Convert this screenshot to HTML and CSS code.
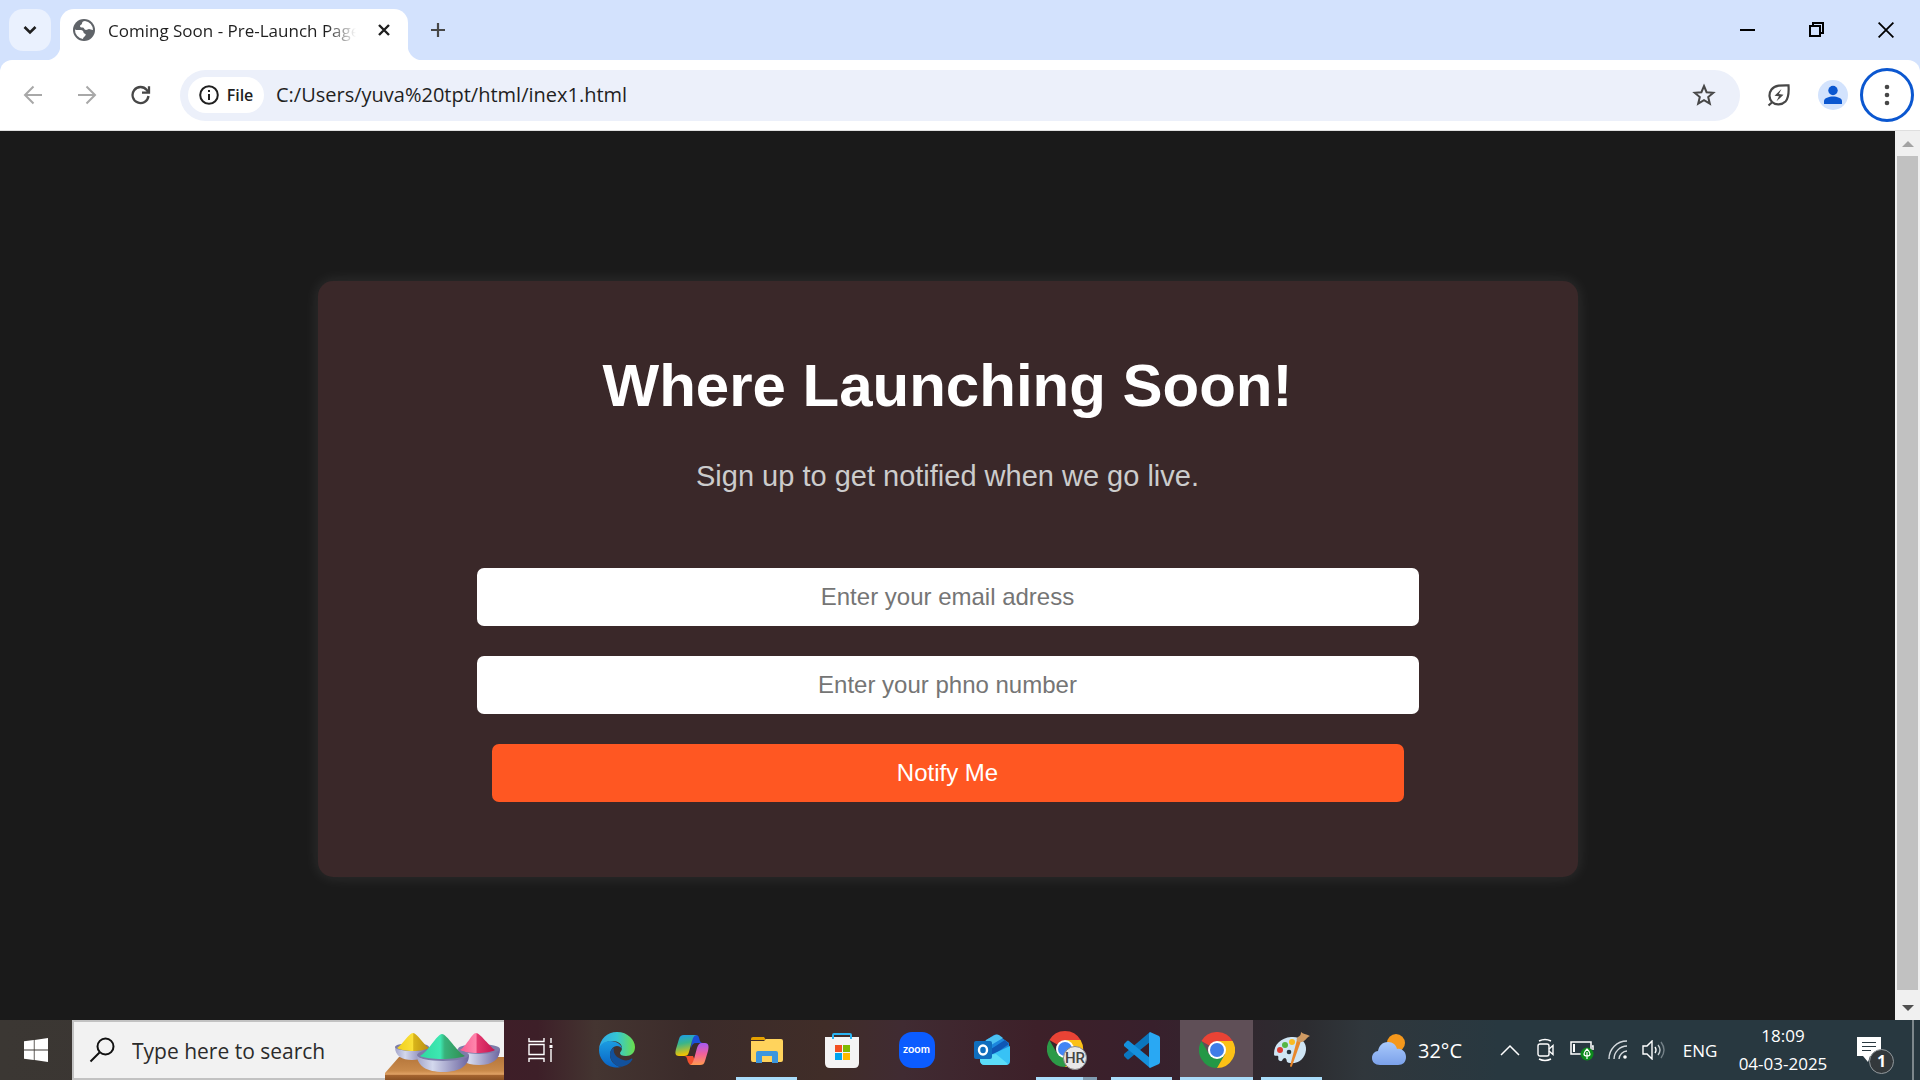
FILE: index.html
```html
<!DOCTYPE html>
<html lang="en">
<head>
<meta charset="utf-8">
<meta name="viewport" content="width=device-width, initial-scale=1">
<title>Coming Soon - Pre-Launch Page</title>
<link rel="stylesheet" href="styles.css">
</head>
<body>
<header class="browser">
  <div class="tabstrip">
    <button class="tab-search" aria-label="Search tabs">
      <svg width="16" height="16" viewBox="0 0 16 16" fill="none" stroke="#1f1f1f" stroke-width="2.6"><path d="M2.5 5 8 10.5 13.500 5"/></svg>
    </button>
    <div class="tab">
      <svg width="22" height="22" viewBox="0 0 22 22"><circle cx="11" cy="11" r="11" fill="#5f6368"/><path d="M12 2c-2 0-3 1-3 2.500 0 1.500-2 1-2 2.500 0 1.300 1 1.600 2.500 1.600 2 0 1.500 2.400 3.500 2.400 1.500 0 1.800-1 3-1 1.500 0 2.200 1 4 1A9 9 0 0 0 12 2ZM2 10.500c2 1 5 0 7 .8 2 .9 1 2.700 2.500 3.200 1.700.5 1.500 1.500.5 2.500-.9.900-1.800 1.700-2 3A9 9 0 0 1 2 10.500Z" fill="#fff"/></svg>
      <span class="tab-title">Coming Soon - Pre-Launch Page</span>
      <button class="tab-close" aria-label="Close tab">
        <svg width="14" height="14" viewBox="0 0 14 14" stroke="#1f1f1f" stroke-width="2.400"><path d="m2 2 10 10M12 2 2 12"/></svg>
      </button>
    </div>
    <button class="new-tab" aria-label="New tab">
      <svg width="16" height="16" viewBox="0 0 16 16" stroke="#474747" stroke-width="2.200"><path d="M8 1v14M1 8h14"/></svg>
    </button>
    <div class="window-controls">
      <button aria-label="Minimize"><svg width="16" height="16" viewBox="0 0 16 16"><path d="M0 7h15v2H0z"/></svg></button>
      <button aria-label="Restore"><svg width="16" height="16" viewBox="0 0 16 16" fill="none" stroke="#000" stroke-width="2"><path d="M1 4h10v10H1zM4 4V1h10v10h-3"/></svg></button>
      <button aria-label="Close"><svg width="16" height="16" viewBox="0 0 16 16" stroke="#000" stroke-width="1.800"><path d="m.6.6 14.800 14.800M15.400.6.600 15.400"/></svg></button>
    </div>
  </div>
  <div class="toolbar">
    <nav class="history" aria-label="History">
      <button aria-label="Back"><svg width="20" height="20" viewBox="0 0 20 20" fill="none" stroke="#a8a8a8" stroke-width="2"><path d="M19 10H2.500M10.500 1.500 2 10l8.500 8.500"/></svg></button>
      <button aria-label="Forward"><svg width="20" height="20" viewBox="0 0 20 20" fill="none" stroke="#a8a8a8" stroke-width="2"><path d="M1 10h16.500M9.500 1.500 18 10l-8.500 8.500"/></svg></button>
      <button aria-label="Reload"><svg width="20" height="20" viewBox="0 0 20 20" fill="none" stroke="#474747" stroke-width="2.300"><path d="M17.500 11A8 8 0 1 1 15.800 5l2 2.300M18 1.200v6.500h-7"/></svg></button>
    </nav>
    <div class="omnibox">
      <button class="chip">
        <svg width="20" height="20" viewBox="0 0 20 20" fill="none" stroke="#1f1f1f" stroke-width="2"><circle cx="10" cy="10" r="8.800"/><path d="M10 9v6M10 5v2"/></svg>
        <span>File</span>
      </button>
      <input class="address" type="text" aria-label="Address" value="C:/Users/yuva%20tpt/html/inex1.html">
      <button class="star" aria-label="Bookmark"><svg width="24" height="24" viewBox="0 0 24 24" fill="none" stroke="#474747" stroke-width="2"><path d="m12 3 2.600 6.200 6.700.5-5.100 4.400 1.600 6.500-5.800-3.500-5.800 3.500 1.600-6.500L2.700 9.700l6.700-.5z"/></svg></button>
    </div>
    <div class="actions">
      <button aria-label="Energy saver"><svg width="24" height="24" viewBox="0 0 24 24" fill="none" stroke="#474747" stroke-width="2.200"><path d="M21.500 2.300C15 2.200 8 2 4.500 6.500 1.500 10.500 2 16 5 19c3.500 3.500 10 3 13.500-.5 3.500-3.700 3.500-9 3-16.200ZM1.500 22.500 6 18.500"/><path d="m14.500 6-7 6.700 4.500.6-2.500 5 7-6.600-4.600-.7z" fill="#474747" stroke="none"/></svg></button>
      <button aria-label="Profile"><svg width="30" height="30" viewBox="0 0 30 30"><circle cx="15" cy="15" r="15" fill="#d3e3fd"/><circle cx="15" cy="10.500" r="4.700" fill="#0b57d0"/><path d="M6 24v-3c0-3 5-4.500 9-4.500s9 1.500 9 4.500v3z" fill="#0b57d0"/></svg></button>
      <button class="menu" aria-label="Menu"><svg width="6" height="22" viewBox="0 0 6 22" fill="#474747"><circle cx="3" cy="3" r="2.300"/><circle cx="3" cy="11" r="2.300"/><circle cx="3" cy="19" r="2.300"/></svg></button>
    </div>
  </div>
</header>

<div class="viewport">
  <main class="page">
    <section class="card">
      <h1>Where Launching Soon!</h1>
      <p>Sign up to get notified when we go live.</p>
      <form class="signup">
        <input type="email" aria-label="Email address" placeholder="Enter your email adress">
        <input type="tel" aria-label="Phone number" placeholder="Enter your phno number">
        <button type="button">Notify Me</button>
      </form>
    </section>
  </main>
  <div class="scrollbar">
    <svg width="12" height="6" viewBox="0 0 12 6"><path d="M6 0 12 6H0z" fill="#a3a3a3"/></svg>
    <div class="thumb"></div>
    <svg width="12" height="6" viewBox="0 0 12 6"><path d="M0 0h12L6 6z" fill="#505050"/></svg>
  </div>
</div>

<footer class="taskbar">
  <button class="start" aria-label="Start"><svg width="24" height="24" viewBox="0 0 24 24" fill="#fff"><path d="M0 3.300 9.800 2v9.600H0zM10.600 1.900 24 0v11.600H10.600zM0 12.400h9.800V22L0 20.700zM10.600 12.400H24V24l-13.400-1.900z"/></svg></button>
  <div class="search">
    <svg width="26" height="26" viewBox="0 0 26 26" fill="none" stroke="#111" stroke-width="2"><circle cx="16.500" cy="9.500" r="8"/><path d="M10.500 15.500 1.500 24.500"/></svg>
    <input type="text" aria-label="Search" placeholder="Type here to search">
    <svg class="holi" width="120" height="54" viewBox="0 0 120 54">
      <defs>
        <linearGradient id="wood" x2="0" y2="1"><stop offset="0" stop-color="#b5763b"/><stop offset=".6" stop-color="#c98a4b"/><stop offset=".75" stop-color="#e0a265"/><stop offset=".8" stop-color="#a4642f"/><stop offset="1" stop-color="#8a5124"/></linearGradient>
        <linearGradient id="bowl"><stop offset="0" stop-color="#a3a5cb"/><stop offset=".3" stop-color="#d3d8ed"/><stop offset="1" stop-color="#6c65a0"/></linearGradient>
        <linearGradient id="yel"><stop offset="0" stop-color="#f0cf1c"/><stop offset=".5" stop-color="#fbe03a"/><stop offset=".52" stop-color="#d9b51a"/><stop offset="1" stop-color="#b98d12"/></linearGradient>
        <linearGradient id="grn"><stop offset="0" stop-color="#2fd9a0"/><stop offset=".45" stop-color="#3ee8b2"/><stop offset=".55" stop-color="#38b27b"/><stop offset="1" stop-color="#318d50"/></linearGradient>
        <linearGradient id="pnk"><stop offset="0" stop-color="#f85c92"/><stop offset=".45" stop-color="#ff85ac"/><stop offset=".5" stop-color="#e43a70"/><stop offset="1" stop-color="#c4154e"/></linearGradient>
      </defs>
      <path d="M15 31h105v23H1v-7z" fill="url(#wood)"/>
      <path d="M11 21c0 9 7 13 17 13s17-4 17-13z" fill="url(#bowl)"/><ellipse cx="28" cy="21" rx="17" ry="4" fill="#7d7ca9"/>
      <path d="M13 22c5-3 12-15 16-15s11 12 16 15c-6 4-26 4-32 0z" fill="url(#yel)"/>
      <path d="M73 23c0 11 8 16 22 16s21-6 21-16z" fill="url(#bowl)"/><ellipse cx="95" cy="23" rx="21" ry="5" fill="#7d7ca9"/>
      <path d="M76 24c6-3 12-17 16-17s14 14 19 17c-6 4-29 4-35 0z" fill="url(#pnk)"/>
      <path d="M33 29c0 11 10 17 26 17s26-6 26-17z" fill="url(#bowl)"/><ellipse cx="59" cy="29" rx="26" ry="6" fill="#7d7ca9"/>
      <path d="M36 30c8-4 17-22 22-22s15 18 23 22c-9 4-37 4-45 0z" fill="url(#grn)"/>
    </svg>
  </div>
  <button class="task-view" aria-label="Task view"><svg width="26" height="26" viewBox="0 0 26 26" fill="none" stroke="#fff" stroke-width="1.400"><path d="M2 1v3.500h15V1M2 7.500h15v10H2zM2 25v-3.500h15V25M24 1v5M24 12v13"/><path d="M22.500 8h3v3h-3z" fill="#fff" stroke="none"/></svg></button>
  <nav class="apps" aria-label="Taskbar apps">
    <button class="app" aria-label="Edge"><svg width="36" height="36" viewBox="0 0 36 36">
      <defs><linearGradient id="e1"><stop offset="0" stop-color="#2fa8e8"/><stop offset=".5" stop-color="#35c6d4"/><stop offset="1" stop-color="#6be04a"/></linearGradient><linearGradient id="e2" x2="0" y2="1"><stop offset="0" stop-color="#1b9de2"/><stop offset="1" stop-color="#0a63c4"/></linearGradient></defs>
      <path d="M0 17C1 7 8 0 18 0c11 0 18 8 18 15 0 6-4 9-9 9-4 0-6-1-6-3 0-1 2-2 2-5 0-4-4-7-9-7C7 9 2 12 0 17Z" fill="url(#e1)"/>
      <path d="M0 18c0-5 5-9 11-9 7 0 12 4 12 8-1-2-3-3-5-3-4 0-7 4-7 9 0 6 5 11 11 12-3 1-13 1-18-6-3-4-4-7-4-11Z" fill="url(#e2)"/>
      <path d="M15 16c-4 2-5 6-3 11 3 7 10 9 13 7 4-1 7-4 8-6 1-1 0-2-1-1-3 2-8 2-12-1-4-2-6-6-5-10Z" fill="#12519c"/></svg></button>
    <button class="app" aria-label="Copilot"><svg width="34" height="32" viewBox="0 0 34 32">
      <defs><linearGradient id="c1" x2=".2" y2="1"><stop offset="0" stop-color="#1a9bf0"/><stop offset=".45" stop-color="#39b58a"/><stop offset="1" stop-color="#f5c400"/></linearGradient><linearGradient id="c2" x2="0" y2="1"><stop offset="0" stop-color="#a45af5"/><stop offset=".5" stop-color="#f2609a"/><stop offset="1" stop-color="#ff9a50"/></linearGradient></defs>
      <path d="M17 1h4c3 0 3 3 4 6 1 2 2 2 4 2h-8c-3 0-4 2-5 5z" fill="#1b4fd8"/>
      <path d="M9 22c3 0 3 3 4 6 1 2 2 3 4 3h5l-4-9z" fill="#f0502e"/>
      <path d="M9 1h13c-3 0-4 3-5 6l-3 11c-1 3-2 4-5 4H4c-4 0-4-3-3-7l3-10c1-3 2-4 5-4Z" fill="url(#c1)"/>
      <path d="M25 31H14c3 0 4-3 5-6l3-11c1-3 2-5 5-5h3c4 0 4 4 3 8l-3 10c-1 3-2 4-5 4Z" fill="url(#c2)"/></svg></button>
    <button class="app open" aria-label="File Explorer"><svg width="32" height="28" viewBox="0 0 32 28"><path d="M0 3q0-2 2-2h11l2 3H0z" fill="#e5a100"/><path d="M0 5h13l2-2h15q2 0 2 2v19q0 2-2 2H2q-2 0-2-2z" fill="#ffd35c"/><path d="M5 27V17q0-2 2-2h18q2 0 2 2v10h-6v-7H11v7z" fill="#3c96de"/></svg></button>
    <button class="app" aria-label="Microsoft Store"><svg width="36" height="36" viewBox="0 0 36 36"><path d="M9 8V3q0-1 1-1h16q1 0 1 1v5" fill="none" stroke="#2ab4f2" stroke-width="2"/><path d="M1 5h34v26q0 5-5 5H6q-5 0-5-5z" fill="#f4f4f4"/><path d="M9 3v4M27 3v4" stroke="#2ab4f2" stroke-width="2"/><path d="M11 13h7v7h-7z" fill="#f25022"/><path d="M19 13h7v7h-7z" fill="#7fba00"/><path d="M11 21h7v7h-7z" fill="#00a4ef"/><path d="M19 21h7v7h-7z" fill="#ffb900"/></svg></button>
    <button class="app" aria-label="Zoom"><span class="zoom-logo">zoom</span></button>
    <button class="app" aria-label="Outlook"><svg width="36" height="32" viewBox="0 0 36 32"><path d="M6 10 20 1q2-1 4 0l11 8v8L12 22z" fill="#1b86dd"/><path d="m12 6 9-5q2-1 4 0l4 3-17 10z" fill="#4cc1f2"/><path d="m17 15 14-9 4 4-17 12z" fill="#0f57b5"/><path d="M36 12v15q0 4-4 4H11q-5 0-5-5z" fill="#38c2f5"/><path d="m6 22 16-2 12 10q-1 1-3 1H11q-5 0-5-5z" fill="#5bdcf8"/><rect y="7" width="18" height="18" rx="2" fill="#106ebe"/><ellipse cx="9" cy="16" rx="4" ry="4.500" fill="none" stroke="#fff" stroke-width="2.400"/></svg></button>
    <button class="app open grouped" aria-label="Chrome, second profile"><svg width="40" height="40" viewBox="0 0 40 40"><path d="M2.400 10A18 18 0 0 1 33.600 10L18 19z" fill="#e94335"/><path d="M2.400 10 10.200 23.500 18 19 25.800 23.500 18 37A18 18 0 0 1 2.400 10z" fill="#2c9a47"/><path d="M18 10h15.600A18 18 0 0 1 18 37l7.800-13.500z" fill="#fbc116"/><circle cx="18" cy="19" r="9" fill="#fff"/><circle cx="18" cy="19" r="7" fill="#4285f4"/><circle cx="28" cy="28" r="11.500" fill="#e8e8e8" stroke="#888"/><text x="28" y="33" text-anchor="middle" font-family="Roboto, sans-serif" font-size="15" font-weight="500" fill="#444">HR</text></svg></button>
    <button class="app open" aria-label="Visual Studio Code"><svg width="36" height="36" viewBox="0 0 36 36"><path d="M26 0v10L5 27q-1 1-2 0l-3-3q-1-1 0-2z" fill="#0b76be"/><path d="M26 36V26L5 9Q4 8 3 9l-3 3q-1 1 0 2z" fill="#1590dc"/><path d="m26 0 9 4q1 1 1 2v24q0 1-1 2l-9 4q-1-1-1-2V2q0-1 1-2z" fill="#29a8f3"/></svg></button>
    <button class="app open active" aria-label="Chrome"><svg width="36" height="36" viewBox="0 0 36 36"><path d="M2.400 9A18 18 0 0 1 33.600 9L18 18z" fill="#e94335"/><path d="M2.400 9 10.200 22.500 18 18 25.800 22.500 18 36A18 18 0 0 1 2.400 9z" fill="#249846"/><path d="M18 9h15.600A18 18 0 0 1 18 36l7.800-13.500z" fill="#fbc116"/><circle cx="18" cy="18" r="9" fill="#fff"/><circle cx="18" cy="18" r="7" fill="#3f7de8"/></svg></button>
    <button class="app open" aria-label="Paint"><svg width="36" height="36" viewBox="0 0 36 36"><path d="M17 5c9-1 16 5 15 13-1 9-8 14-16 13-5 0-2-4-5-5-3 0-2 4-5 3s-1-4-2-5-4 1-4-2C0 12 7 6 17 5Z" fill="#cfe5f4"/><circle cx="6" cy="18" r="3" fill="#df3d33"/><circle cx="11" cy="13" r="3" fill="#55b544"/><circle cx="18" cy="10" r="3" fill="#f9bb22"/><circle cx="15" cy="20" r="2.300" fill="#243440"/><path d="M27 9 18 34q-1 2-2 0l7-26z" fill="#e8872b"/><path d="M27 0c2 2 5 2 9 4-3 1-6 7-10 6-3 0-4-2-3-4 2-2 4-2 4-6Z" fill="#cf9a63"/></svg></button>
  </nav>
  <div class="tray">
    <button class="weather">
      <svg width="34" height="32" viewBox="0 0 34 32"><defs><linearGradient id="cl" x2="0" y2="1"><stop offset="0" stop-color="#a9c9fb"/><stop offset="1" stop-color="#7ba1ea"/></linearGradient></defs><circle cx="24" cy="9" r="9" fill="#f5981c"/><path d="M8 31c-5 0-8-3-8-7s3-7 6-7c1-5 4-9 10-9 5 0 8 3 9 7 5-1 9 3 9 8s-3 8-8 8z" fill="url(#cl)"/></svg>
      <span>32°C</span>
    </button>
    <button class="tray-icon" aria-label="Show hidden icons"><svg width="20" height="12" viewBox="0 0 20 12" fill="none" stroke="#fff" stroke-width="1.500"><path d="m1 11 9-9 9 9"/></svg></button>
    <button class="tray-icon" aria-label="Meet now"><svg width="18" height="24" viewBox="0 0 18 24" fill="none" stroke="#fff" stroke-width="1.400"><rect x="1" y="6" width="11" height="12" rx="2"/><path d="m12 11 4-3.500v9L12 13M2 3q6-3 12 0M2 21q6 3 12 0"/></svg></button>
    <button class="tray-icon" aria-label="Battery"><svg width="24" height="22" viewBox="0 0 24 22"><path d="M1 3h20v12H1zM22 7h1v4" fill="none" stroke="#fff" stroke-width="1.500"/><path d="M3 5h2v8H3z" fill="#fff"/><circle cx="17" cy="15" r="6.500" fill="#0d8a1c"/><path d="M17 10q-3 3-3 5 0 2 3 2t3-2q0-2-3-5zM17 13v7" fill="none" stroke="#fff" stroke-width="1.200"/></svg></button>
    <button class="tray-icon" aria-label="Wi-Fi"><svg width="20" height="20" viewBox="0 0 20 20" fill="none" stroke="#d5dade" stroke-width="1.400"><path d="M1 19C1 9 9 1 19 1M6 19C6 12 12 6 19 6M11 19c0-4 4-8 8-8"/><circle cx="17" cy="17" r="1.800" fill="#fff" stroke="none"/></svg></button>
    <button class="tray-icon" aria-label="Volume"><svg width="24" height="20" viewBox="0 0 24 20" fill="none" stroke="#fff" stroke-width="1.400"><path d="M1 6h4l5-5v18l-5-5H1zM13 7q2 3 0 6"/><path d="M16 5q4 5 0 10" stroke="#c4cbce"/><path d="M19 2q6 8 0 16" stroke="#748188"/></svg></button>
    <button class="lang">ENG</button>
    <button class="clock"><span>18:09</span><span>04-03-2025</span></button>
    <button class="notify" aria-label="Notifications, 1 new"><svg width="24" height="27" viewBox="0 0 24 27"><path d="M0 0h24v19H13l-2 6-5-6H0z" fill="#fff"/><path d="M5 5.500h14M5 9.500h14M5 13.500h9" stroke="#2a3940" stroke-width="1.200"/></svg><span class="badge">1</span></button>
    <button class="desktop" aria-label="Show desktop"></button>
  </div>
</footer>
</body>
</html>
```
FILE: styles.css
```css
* { box-sizing: border-box; }

body {
  margin: 0;
  min-height: 100vh;
  display: flex;
  flex-direction: column;
  font-family: "Open Sans", "Noto Sans", sans-serif;
  color: #1f1f1f;
  background: #1a1a1a;
}

button {
  display: flex;
  align-items: center;
  justify-content: center;
  padding: 0;
  border: 0;
  background: none;
  font: inherit;
  color: inherit;
}

input { font: inherit; border: 0; outline: 0; min-width: 0; }
svg { display: block; flex: none; }

/* Browser frame */
.browser { background: #d3e2fd; }
.tabstrip { display: flex; height: 60px; padding: 9px 0 0 9px; }
.tab-search { width: 42px; height: 42px; border-radius: 14px; background: #eaf1fe; }

.tab {
  position: relative;
  display: flex;
  align-items: center;
  width: 348px;
  height: 51px;
  margin-left: 9px;
  padding: 0 12px 9px 13px;
  border-radius: 14px 14px 0 0;
  background: #fff;
}
.tab::before, .tab::after {
  content: "";
  position: absolute;
  bottom: 0;
  width: 15px;
  height: 15px;
}
.tab::before { right: 100%; background: radial-gradient(circle at 0 0, transparent 15px, #fff 16px); }
.tab::after { left: 100%; background: radial-gradient(circle at 100% 0, transparent 15px, #fff 16px); }
.tab-title {
  flex: 1;
  margin-left: 13px;
  padding-top: 2px;
  overflow: hidden;
  white-space: nowrap;
  font-size: 17px;
  line-height: 24px;
  mask-image: linear-gradient(90deg, #000 88%, transparent);
}
.tab-close { width: 24px; height: 24px; margin-left: 16px; }
.new-tab { width: 42px; height: 42px; margin-left: 9px; }
.window-controls { display: flex; margin-left: auto; }
.window-controls button { width: 69px; height: 41px; }

.toolbar {
  display: flex;
  align-items: center;
  height: 71px;
  padding: 0 6px 0 6px;
  border-radius: 12px 12px 0 0;
  border-bottom: 1px solid #dfdfdf;
  background: #fff;
}
.history { display: flex; margin-right: 12px; }
.history button { width: 54px; height: 48px; }
.omnibox {
  display: flex;
  flex: 1;
  align-items: center;
  height: 51px;
  padding: 0 15px 0 8px;
  border-radius: 26px;
  background: #ecf0fa;
}
.chip {
  gap: 8px;
  width: 76px;
  height: 36px;
  border-radius: 18px;
  background: #fff;
  font-size: 16px;
  font-weight: 600;
}
.address { flex: 1; padding: 0 12px; background: none; font-size: 20px; line-height: 28px; color: #1f1f1f; }
.star { width: 42px; height: 42px; }
.actions { display: flex; align-items: center; margin-left: 12px; }
.actions button { width: 54px; height: 54px; }
.actions .menu { border: 3px solid #0b57d0; border-radius: 50%; }

/* Launch page */
.viewport { flex: 1; display: flex; background: #1a1a1a; }
.page {
  flex: 1;
  padding: 150px 24px 143px;
  font-family: Arial, "Liberation Sans", sans-serif;
  text-align: center;
}
.card {
  max-width: 1260px;
  margin: 0 auto;
  padding: 60px;
  border-radius: 15px;
  background: #3a2829;
  box-shadow: 0 0 15px rgba(255, 255, 255, 0.1);
}
.card h1 { margin: 0; font-size: 60px; line-height: 90px; color: #fff; }
.card p { margin: 24px 0 55px; font-size: 29px; line-height: 43px; color: #ccc; }
.signup { display: flex; flex-direction: column; align-items: center; }
.signup input, .signup button {
  width: 80%;
  margin: 15px 0;
  padding: 15px;
  border-radius: 7px;
  font-size: 24px;
  line-height: 28px;
}
.signup input { box-sizing: content-box; height: 28px; text-align: center; background: #fff; }
.signup input::placeholder { color: #757575; }
.signup button { background: #ff5722; color: #fff; }

.scrollbar {
  display: flex;
  flex-direction: column;
  align-items: center;
  gap: 9px;
  width: 25px;
  padding: 10px 2px 9px;
  background: #f0f0f0;
}
.thumb { flex: 1; width: 21px; margin-bottom: 6px; background: #c1c1c1; }

/* Taskbar */
.taskbar {
  display: flex;
  height: 60px;
  color: #fff;
  background: linear-gradient(90deg, #3b3733 0%, #3a3532 12%, #3e1e28 26%, #3d1f28 28%, #443531 31%, #3b2b2a 36%, #402d28 43%, #402b32 47%, #3d2029 54%, #38202c 60%, #2c2c30 68%, #30373c 71%, #283840 78%, #283840 100%);
}
.start { width: 72px; }
.search {
  display: flex;
  align-items: center;
  width: 432px;
  padding-left: 15px;
  border: 2px solid #c2c2c2;
  border-right-width: 0;
  background: #f2f2f2;
}
.search input { flex: 1; padding: 2px 0 0 17px; background: none; font-size: 21px; line-height: 30px; }
.search input::placeholder { color: #2b2b2b; }
.holi { align-self: flex-end; margin-bottom: -2px; }
.task-view { width: 72px; }
.apps { display: flex; margin-left: 3px; }
.app { position: relative; width: 75px; border: solid transparent; border-width: 0 1px; background-clip: padding-box; }
.app.active { background-color: #5f4f57; }
.app.open::after {
  content: "";
  position: absolute;
  right: 6px;
  bottom: 0;
  left: 6px;
  height: 3px;
  background: #a9dcfa;
}
.app.grouped::after { background: linear-gradient(90deg, #a9dcfa 77%, #7f9bb0 77%); }
.app.active::after { right: 0; left: 0; }
.zoom-logo {
  width: 36px;
  height: 36px;
  border-radius: 13px;
  background: #0b5cff;
  font-family: Lato, sans-serif;
  font-size: 11px;
  font-weight: 700;
  line-height: 34px;
}

.tray { display: flex; margin-left: auto; }
.weather { gap: 12px; margin-right: 30px; font-size: 20px; }
.tray-icon { width: 36px; }
.lang { width: 56px; font-size: 17px; }
.clock { flex-direction: column; width: 110px; font-size: 17px; line-height: 28px; }
.notify { position: relative; justify-content: flex-start; width: 74px; padding-left: 19px; }
.badge {
  position: absolute;
  right: 18px;
  bottom: 6px;
  width: 25px;
  height: 25px;
  border: 1px solid #92999d;
  border-radius: 50%;
  background: #33383b;
  font-size: 16px;
  font-weight: 700;
  line-height: 22px;
}
.desktop { width: 8px; border-left: 2px solid #7d878c; }
```
